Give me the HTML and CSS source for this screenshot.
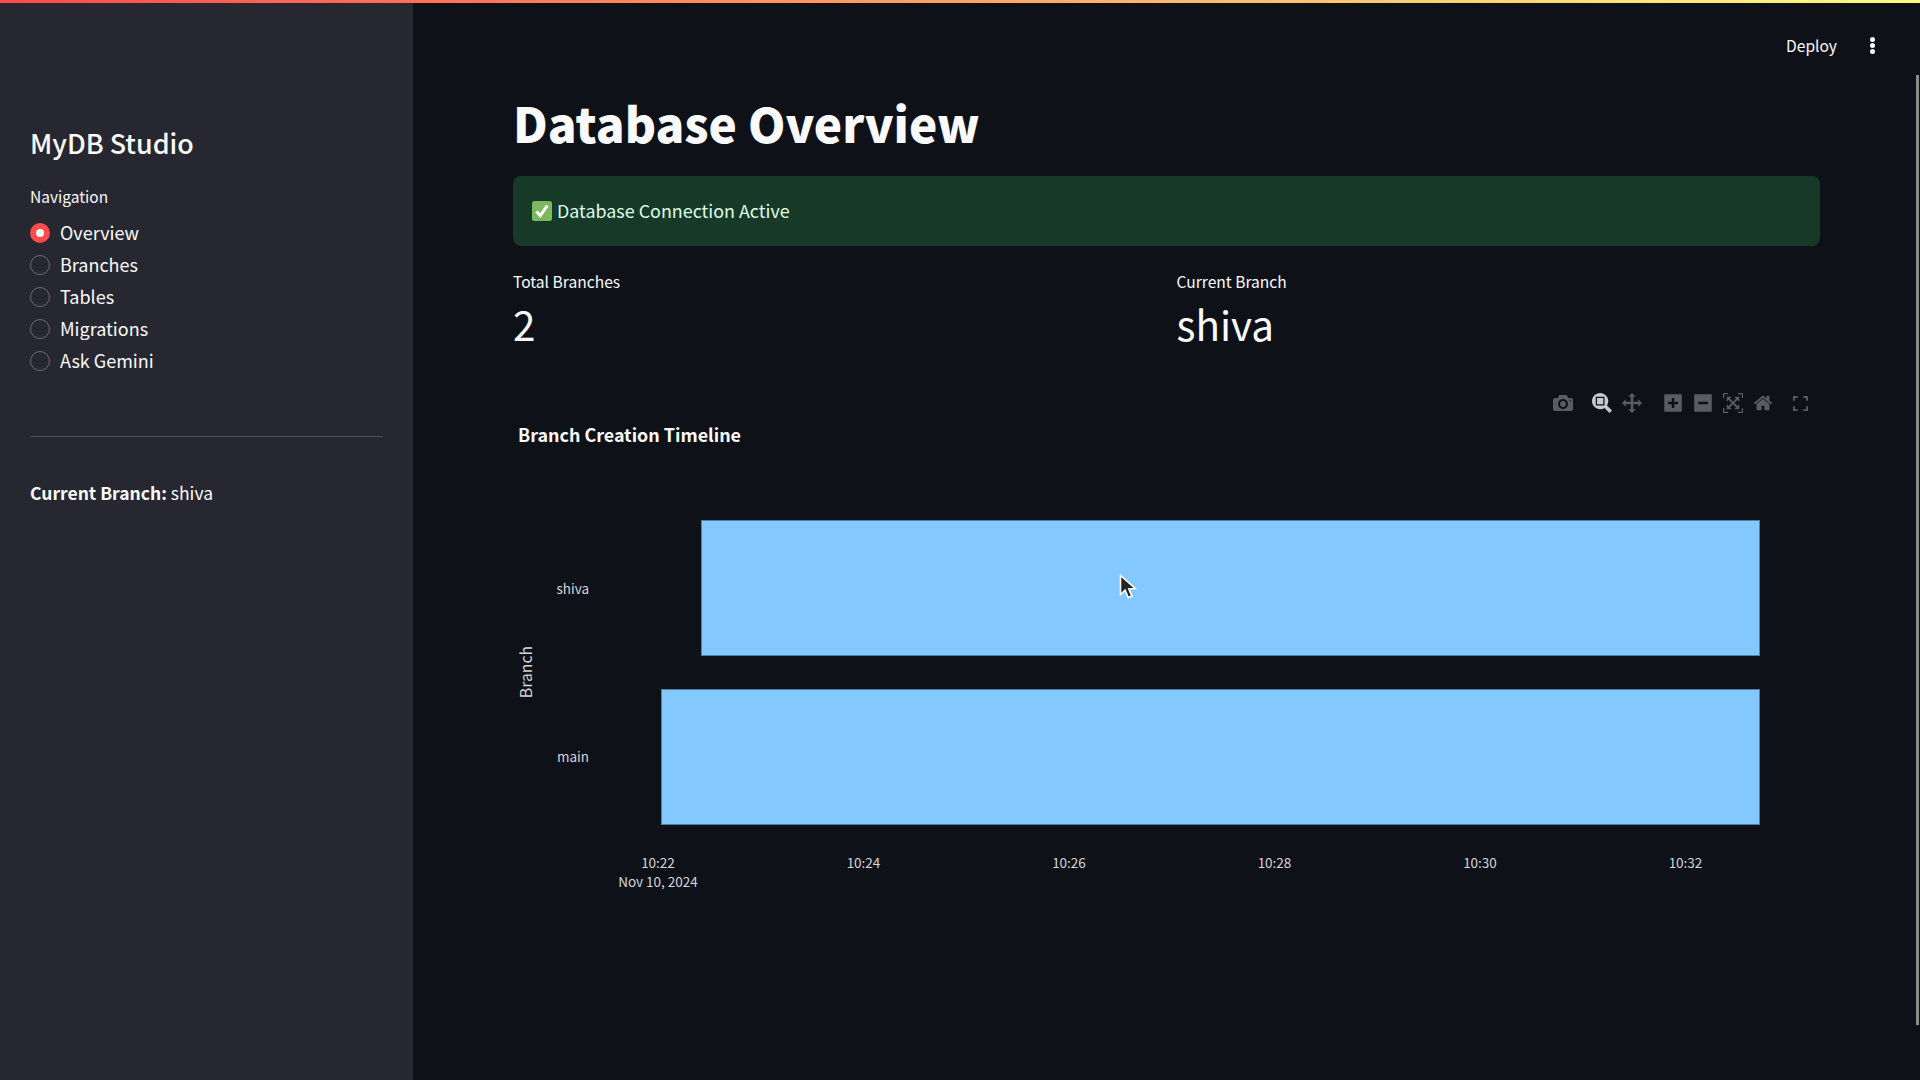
FILE: index.html
```html
<!DOCTYPE html>
<html lang="en">
<head>
    <meta charset="UTF-8">
    <meta name="viewport" content="width=device-width, initial-scale=1.0">
    <title>MyDB Studio</title>
    <link rel="stylesheet" href="styles.css">
</head>
<body>
    <div class="decoration"></div>
    <div class="app">
        <aside class="sidebar">
            <h2 class="brand">MyDB Studio</h2>
            <p class="nav-label">Navigation</p>
            <ul class="nav">
                <li class="nav-item active"><span class="radio"></span>Overview</li>
                <li class="nav-item"><span class="radio"></span>Branches</li>
                <li class="nav-item"><span class="radio"></span>Tables</li>
                <li class="nav-item"><span class="radio"></span>Migrations</li>
                <li class="nav-item"><span class="radio"></span>Ask Gemini</li>
            </ul>
            <hr class="divider">
            <p class="current"><strong>Current Branch:</strong> shiva</p>
        </aside>

        <main class="main">
            <div class="toolbar">
                <span class="deploy">Deploy</span>
                <span class="dots"><i></i><i></i><i></i></span>
            </div>

            <h1 class="title">Database Overview</h1>

            <div class="alert">
                <svg class="check" viewBox="0 0 20 20">
                    <rect width="20" height="20" rx="2.5" fill="#7cb860"/>
                    <path d="M4.5 10.5l3.8 4.2 7-10" fill="none" stroke="#fff" stroke-width="3"/>
                </svg>
                <span class="alert-text">Database Connection Active</span>
            </div>

            <div class="metrics">
                <div class="metric">
                    <div class="metric-label">Total Branches</div>
                    <div class="metric-value">2</div>
                </div>
                <div class="metric">
                    <div class="metric-label">Current Branch</div>
                    <div class="metric-value">shiva</div>
                </div>
            </div>

            <div class="chart">
                <div class="modebar">
                    <svg class="mb-icon camera" viewBox="0 0 1000 1000"><path transform="matrix(1 0 0 -1 0 850)" d="m500 450c-83 0-150-67-150-150 0-83 67-150 150-150 83 0 150 67 150 150 0 83-67 150-150 150z m400 150h-120c-16 0-34 13-39 29l-31 93c-6 15-23 28-40 28h-340c-16 0-34-13-39-28l-31-94c-6-15-23-28-40-28h-120c-55 0-100-45-100-100v-450c0-55 45-100 100-100h800c55 0 100 45 100 100v450c0 55-45 100-100 100z m-400-550c-138 0-250 112-250 250 0 138 112 250 250 250 138 0 250-112 250-250 0-138-112-250-250-250z m365 380c-19 0-35 16-35 35 0 19 16 35 35 35 19 0 35-16 35-35 0-19-16-35-35-35z"/></svg>
                    <svg class="mb-icon on zoombox" viewBox="0 0 1000 1000"><path transform="matrix(1 0 0 -1 0 850)" d="m1000-25l-250 251c40 63 63 138 63 218 0 224-182 406-407 406-224 0-406-182-406-406s183-406 407-406c80 0 155 22 218 62l250-250 125 125z m-812 250l0 438 437 0 0-438-437 0z m62 375l313 0 0-312-313 0 0 312z"/></svg>
                    <svg class="mb-icon pan" viewBox="0 0 1000 1000"><path transform="matrix(1 0 0 -1 0 850)" d="m1000 350l-187 188 0-125-250 0 0 250 125 0-188 187-187-187 125 0 0-250-250 0 0 125-188-188 186-187 0 125 252 0 0-250-125 0 187-188 188 188-125 0 0 250 250 0 0-125 187 188z"/></svg>
                    <svg class="mb-icon plus" viewBox="0 0 875 1000"><path transform="matrix(1 0 0 -1 0 850)" d="m1 787l0-875 875 0 0 875-875 0z m687-500l-187 0 0-187-125 0 0 187-188 0 0 125 188 0 0 187 125 0 0-187 187 0 0-125z"/></svg>
                    <svg class="mb-icon minus" viewBox="0 0 875 1000"><path transform="matrix(1 0 0 -1 0 850)" d="m0 788l0-876 875 0 0 876-875 0z m688-500l-500 0 0 125 500 0 0-125z"/></svg>
                    <svg class="mb-icon autoscale" viewBox="0 0 1000 1000"><path transform="matrix(1 0 0 -1 0 850)" d="m250 850l-187 0-63 0 0-62 0-188 63 0 0 188 187 0 0 62z m688 0l-188 0 0-62 188 0 0-188 62 0 0 188 0 62-62 0z m-875-938l0 188-63 0 0-188 0-62 63 0 187 0 0 62-187 0z m875 188l0-188-188 0 0-62 188 0 62 0 0 62 0 188-62 0z m-125 188l-1 0-93-94-156 156 156 156 92-93 2 0 0 250-250 0 0-2 93-92-156-156-156 156 94 92 0 2-250 0 0-250 0 0 93 93 157-156-157-156-93 94 0 0 0-250 250 0 0 0-94 93 156 157 156-157-93-93 0 0 250 0 0 250z"/></svg>
                    <svg class="mb-icon home" viewBox="0 0 928.6 1000"><path transform="matrix(1 0 0 -1 0 850)" d="m786 296v-267q0-15-11-26t-25-10h-214v214h-143v-214h-214q-15 0-25 10t-11 26v267q0 1 0 2t0 2l321 264 321-264q1-1 1-4z m124 39l-34-41q-5-5-12-6h-2q-7 0-12 3l-386 322-386-322q-7-4-13-4-7 2-12 7l-35 41q-4 5-3 13t6 12l401 334q18 15 42 15t43-15l136-114v109q0 8 5 13t13 5h107q8 0 13-5t5-13v-227l122-102q5-5 6-12t-4-13z"/></svg>
                    <svg class="mb-icon fullscreen" viewBox="0 0 16 16"><path d="M0 0h5v2H2v3H0zM11 0h5v5h-2V2h-3zM0 11h2v3h3v2H0zM14 11h2v5h-5v-2h3z"/></svg>
                </div>

                <svg class="plot" viewBox="513 380 1307 520">
                    <text class="plot-title" x="518" y="442">Branch Creation Timeline</text>

                    <rect class="bar" x="701.5" y="520.5" width="1058" height="135"/>
                    <rect class="bar" x="661.5" y="689.5" width="1098" height="135"/>

                    <text class="tick end" x="589" y="594">shiva</text>
                    <text class="tick end" x="589" y="762">main</text>
                    <text class="axis-title" transform="translate(532 672) rotate(-90)">Branch</text>

                    <text class="tick mid" x="658" y="868">10:22</text>
                    <text class="tick mid" x="658" y="887">Nov 10, 2024</text>
                    <text class="tick mid" x="863.5" y="868">10:24</text>
                    <text class="tick mid" x="1069" y="868">10:26</text>
                    <text class="tick mid" x="1274.5" y="868">10:28</text>
                    <text class="tick mid" x="1480" y="868">10:30</text>
                    <text class="tick mid" x="1685.5" y="868">10:32</text>
                </svg>

                <svg class="pointer" viewBox="0 0 18 26">
                    <path d="M1.5 1.5v19l4.6-4.3 3.2 7.4 3.6-1.5-3.1-7.2 6.4-.4z" fill="#222" stroke="#fff" stroke-width="1.6"/>
                </svg>
            </div>
            <div class="scrollbar"></div>
        </main>
    </div>
</body>
</html>
```

FILE: styles.css
```css
* { box-sizing: border-box; }
html, body { height: 100%; }
body { margin: 0; display: flex; flex-direction: column; overflow: hidden; background-color: #0e1117; color: #fafafa; font-family: "Noto Sans CJK SC", "Noto Sans", sans-serif; font-size: 16px; }

.decoration { height: 3px; flex: none; background: linear-gradient(90deg, #ff4b4b, #fffd80); }
.app { flex: 1; display: flex; min-height: 0; }

/* sidebar */
.sidebar { width: 413px; flex: none; background-color: #262730; padding: 120px 30px 0; }
.brand { margin: 0; font-size: 26.9px; font-weight: 500; line-height: 40px; }
.nav-label { margin: 23px 0 0; font-size: 15.5px; line-height: 20px; }
.nav { list-style: none; margin: 10px 0 0; padding: 0; }
.nav-item { display: flex; align-items: center; gap: 10px; height: 32px; line-height: 32px; font-size: 18px; }
.radio { width: 20px; height: 20px; margin-top: 2px; border-radius: 50%; border: 1px solid #6b6c75; }
.active .radio { background-color: #ff4b4b; border: 6px solid #ff4b4b; }
.active .radio::after { content: ""; display: block; width: 8px; height: 8px; border-radius: 50%; background-color: #fafafa; }
.divider { border: none; border-top: 1px solid rgba(250, 250, 250, 0.2); margin: 60px 0 0; }
.current { margin: 43px 0 0; line-height: 26px; font-size: 17.5px; }
.current strong { font-weight: 600; }

/* main column */
.main { flex: 1; position: relative; padding: 0 100px; }
.toolbar { display: flex; justify-content: flex-end; align-items: center; height: 84px; margin-bottom: 3px; margin-right: -60px; gap: 27px; }
.deploy { font-size: 15.6px; }
.dots { display: flex; flex-direction: column; gap: 1px; width: 16px; align-items: center; }
.dots i { width: 5px; height: 5px; border-radius: 50%; background-color: #fafafa; }

.title { margin: 0; font-size: 47.7px; font-weight: 800; line-height: 66px; }

.alert { display: flex; align-items: center; gap: 5px; height: 70px; margin-top: 20px; padding: 0 19px; border-radius: 8px; background-color: #173928; color: #dffde9; font-size: 17.9px; }
.alert-text { margin-top: -2px; }
.check { width: 20px; height: 20px; }

.metrics { display: grid; grid-template-columns: 1fr 1fr; gap: 20px; margin-top: 25px; }
.metric-label { font-size: 15.6px; line-height: 20px; }
.metric-value { font-size: 40.4px; line-height: 60px; margin-top: 3px; }

/* plot */
.chart { position: relative; margin-top: 26px; }
.plot { display: block; width: 1307px; height: 520px; }
.plot-title { font-size: 17.9px; font-weight: 700; fill: #fafafa; }
.bar { fill: #83c9ff; stroke: #4f7fa3; stroke-width: 1; }
.tick { font-size: 13.5px; fill: #d5d6d8; }
.end { text-anchor: end; }
.mid { text-anchor: middle; }
.axis-title { font-size: 15.8px; fill: #d5d6d8; text-anchor: middle; }

.modebar { position: absolute; top: 13px; right: 12px; display: flex; align-items: flex-start; }
.mb-icon { display: block; width: 20px; height: 20px; fill: #5a5c60; margin-left: 10px; }
.mb-icon.on { fill: #c8c9ca; }
.mb-icon.camera { margin-left: 0; }
.mb-icon.zoombox { margin-left: 19px; }
.mb-icon.plus { margin-left: 21px; }
.mb-icon.fullscreen { width: 15px; height: 15px; margin: 3px 0 0 20px; }

.pointer { position: absolute; left: 606px; top: 194px; width: 18px; height: 26px; }

.scrollbar { position: absolute; top: 72px; right: 1px; width: 3px; height: 950px; background-color: #8b8b8b; }
```
